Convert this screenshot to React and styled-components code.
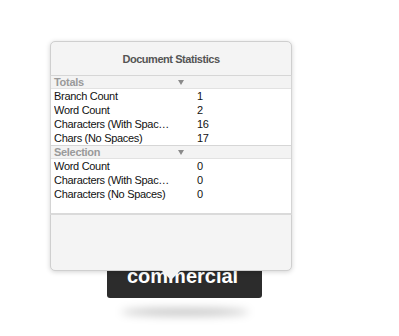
import React from 'react'
import styled, { createGlobalStyle } from 'styled-components'

const GlobalStyle = createGlobalStyle`
  body {
    margin: 0;
    background: #ffffff;
    font-family: "Liberation Sans", Arial, sans-serif;
  }
`

const Stage = styled.div`
  position: relative;
  width: 399px;
  height: 336px;
  padding: 262px 0 0 107px;
  box-sizing: border-box;
`

const Tag = styled.div`
  position: relative;
  width: 155px;
  height: 36px;
  box-sizing: border-box;
  padding: 4px 0 0 20px;
  background: #2c2c2c;
  border-radius: 0 0 3px 3px;
  color: #ffffff;
  font-size: 20px;
  font-weight: bold;
  line-height: 20px;

  &::after {
    content: '';
    position: absolute;
    left: 14px;
    top: 46px;
    width: 128px;
    height: 8px;
    border-radius: 50%;
    background: rgba(0, 0, 0, 0.22);
    filter: blur(4px);
  }
`

const Popover = styled.div`
  position: absolute;
  left: 50px;
  top: 41px;
  width: 242px;
  height: 230px;
  box-sizing: border-box;
  display: flex;
  flex-direction: column;
  background: #f4f4f4;
  border: 1px solid #cfcfcf;
  border-radius: 5px;
  box-shadow: 0 1px 5px rgba(0, 0, 0, 0.18);

  &::after {
    content: '';
    position: absolute;
    left: 110px;
    bottom: -10px;
    width: 20px;
    height: 10px;
    background: #f4f4f4;
    clip-path: polygon(0 0, 100% 0, 50% 100%);
  }
`

const Title = styled.div`
  height: 33px;
  display: flex;
  align-items: center;
  justify-content: center;
  font-size: 11px;
  font-weight: bold;
  letter-spacing: -0.45px;
  color: #555555;
`

const Table = styled.div`
  background: #ffffff;
  border-bottom: 2px solid #dadada;
  margin: 0 -1px 0 -1px;
  border-left: 1px solid #d4d4d4;
  border-right: 1px solid #d4d4d4;
  padding-bottom: 12px;
`

const GroupHeader = styled.div`
  display: grid;
  grid-template-columns: 124px auto;
  align-items: center;
  height: 12px;
  padding-left: 3px;
  background: #f3f3f3;
  border-top: 1px solid #d6d6d6;
  border-bottom: 1px solid #e2e2e2;
  font-size: 11px;
  font-weight: bold;
  letter-spacing: -0.3px;
  color: #9a9a9a;
  line-height: 12px;
`

const Row = styled.div`
  display: grid;
  grid-template-columns: 143px 1fr;
  align-items: center;
  height: 14px;
  padding-left: 3px;
  font-size: 11px;
  line-height: 14px;
  letter-spacing: -0.3px;
  color: #111111;
`

const Label = styled.span`
  max-width: 118px;
  white-space: nowrap;
  overflow: hidden;
  text-overflow: ellipsis;
`

const Footer = styled.div`
  flex: 1;
`

const groups = [
  {
    name: 'Totals',
    rows: [
      ['Branch Count', '1'],
      ['Word Count', '2'],
      ['Characters (With Spaces)', '16'],
      ['Chars (No Spaces)', '17'],
    ],
  },
  {
    name: 'Selection',
    rows: [
      ['Word Count', '0'],
      ['Characters (With Spaces)', '0'],
      ['Characters (No Spaces)', '0'],
    ],
  },
]

const Caret = () => (
  <svg width="6" height="5" viewBox="0 0 6 5">
    <path d="M0 0 L6 0 L3 5 Z" fill="#8a8a8a" />
  </svg>
)

export default function App() {
  return (
    <>
      <GlobalStyle />
      <Stage>
        <Tag>commercial</Tag>
        <Popover>
          <Title>Document Statistics</Title>
          <Table>
            {groups.map(group => (
              <div key={group.name}>
                <GroupHeader>
                  <span>{group.name}</span>
                  <Caret />
                </GroupHeader>
                {group.rows.map(([label, value]) => (
                  <Row key={label}>
                    <Label>{label}</Label>
                    <span>{value}</span>
                  </Row>
                ))}
              </div>
            ))}
          </Table>
          <Footer />
        </Popover>
      </Stage>
    </>
  )
}
